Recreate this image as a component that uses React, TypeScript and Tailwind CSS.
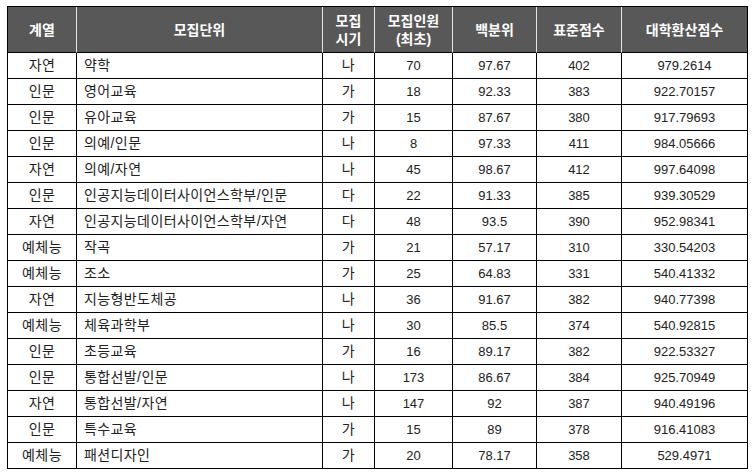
import React from "react";

const rows: string[][] = [
  ["자연", "약학", "나", "70", "97.67", "402", "979.2614"],
  ["인문", "영어교육", "가", "18", "92.33", "383", "922.70157"],
  ["인문", "유아교육", "가", "15", "87.67", "380", "917.79693"],
  ["인문", "의예/인문", "나", "8", "97.33", "411", "984.05666"],
  ["자연", "의예/자연", "나", "45", "98.67", "412", "997.64098"],
  ["인문", "인공지능데이터사이언스학부/인문", "다", "22", "91.33", "385", "939.30529"],
  ["자연", "인공지능데이터사이언스학부/자연", "다", "48", "93.5", "390", "952.98341"],
  ["예체능", "작곡", "가", "21", "57.17", "310", "330.54203"],
  ["예체능", "조소", "가", "25", "64.83", "331", "540.41332"],
  ["자연", "지능형반도체공", "나", "36", "91.67", "382", "940.77398"],
  ["예체능", "체육과학부", "나", "30", "85.5", "374", "540.92815"],
  ["인문", "초등교육", "가", "16", "89.17", "382", "922.53327"],
  ["인문", "통합선발/인문", "나", "173", "86.67", "384", "925.70949"],
  ["자연", "통합선발/자연", "나", "147", "92", "387", "940.49196"],
  ["인문", "특수교육", "가", "15", "89", "378", "916.41083"],
  ["예체능", "패션디자인", "가", "20", "78.17", "358", "529.4971"],
];

const widths = [69, 246, 52, 78, 84, 85, 126];

const th =
  "h-[46px] p-0 bg-[#585858] text-white font-bold text-[14px] leading-[18px] border-r border-b border-r-[#e6e6e6] border-b-black";

export default function App() {
  return (
    <div
      className="w-[754px] h-[475px] bg-white pt-[6px] pl-[7px]"
      style={{ fontFamily: '"Liberation Sans", "Noto Sans CJK KR", sans-serif' }}
    >
      <table className="table-fixed w-[741px] border-separate border-spacing-0 border-l border-t border-black text-[13px]">
        <colgroup>
          {widths.map((w, i) => (
            <col key={i} style={{ width: w }} />
          ))}
        </colgroup>
        <thead>
          <tr>
            <th className={th}>계열</th>
            <th className={th}>모집단위</th>
            <th className={th}>
              모집
              <br />
              시기
            </th>
            <th className={th}>
              모집인원
              <br />
              (최초)
            </th>
            <th className={th}>백분위</th>
            <th className={th}>표준점수</th>
            <th className="h-[46px] p-0 bg-[#585858] text-white font-bold text-[14px] leading-[18px] border-r border-b border-black">
              대학환산점수
            </th>
          </tr>
        </thead>
        <tbody>
          {rows.map((r, i) => (
            <tr key={i}>
              {r.map((c, j) => (
                <td
                  key={j}
                  className={
                    j === 1
                      ? "h-[26px] py-0 pl-[7px] pr-0 text-left text-[14px] tracking-[0.4px] text-[#222] border-r border-b border-black whitespace-nowrap"
                      : j < 3
                      ? "h-[26px] p-0 text-center text-[14px] tracking-[0.4px] text-[#222] border-r border-b border-black whitespace-nowrap"
                      : "h-[26px] p-0 text-center text-[13px] text-[#222] border-r border-b border-black whitespace-nowrap"
                  }
                >
                  {c}
                </td>
              ))}
            </tr>
          ))}
        </tbody>
      </table>
    </div>
  );
}
